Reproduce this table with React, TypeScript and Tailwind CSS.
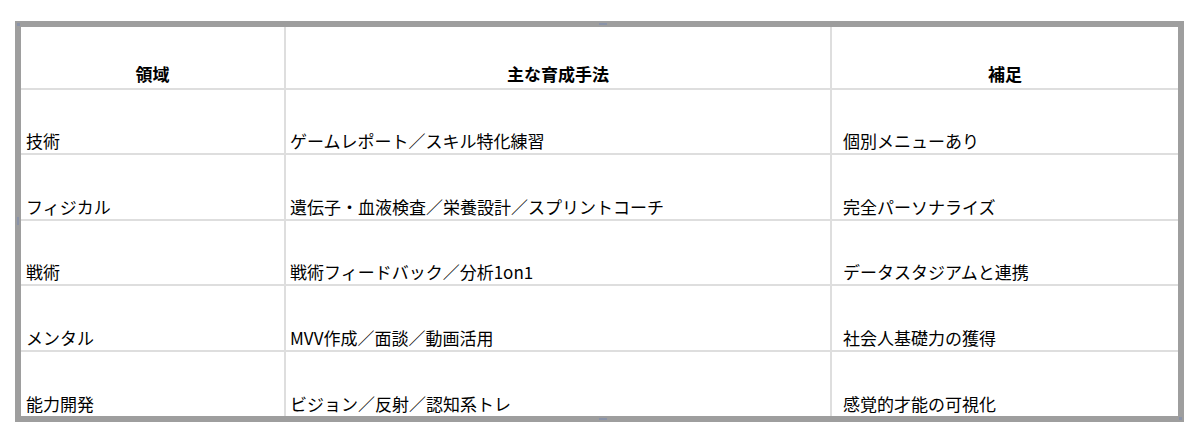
import React from "react";

const rows: [string, string, string][] = [
  ["技術", "ゲームレポート／スキル特化練習", "個別メニューあり"],
  ["フィジカル", "遺伝子・血液検査／栄養設計／スプリントコーチ", "完全パーソナライズ"],
  ["戦術", "戦術フィードバック／分析1on1", "データスタジアムと連携"],
  ["メンタル", "MVV作成／面談／動画活用", "社会人基礎力の獲得"],
  ["能力開発", "ビジョン／反射／認知系トレ", "感覚的才能の可視化"],
];

const pad = ["pl-[5px]", "pl-[4px] border-l-2 border-[#dedede]", "pl-[11px] border-l-2 border-[#dedede]"];

export default function App() {
  return (
    <div
      className="flex w-[1200px] h-[440px] bg-white pt-[21px] pl-[15px] items-start"
      style={{ fontFamily: '"Noto Sans CJK JP", "Noto Sans", sans-serif' }}
    >
      <div className="relative flex w-[1169px] h-[401px] border-[6px] border-[#9e9e9e] bg-white">
        <span className="absolute -left-[4px] -top-[4px] w-[3px] h-[3px] bg-[#8a93a8]" />
        <span className="absolute left-[578px] -top-[4px] w-[8px] h-[2px] bg-[#8a93a8]" />
        <span className="absolute left-[578px] -bottom-[4px] w-[8px] h-[2px] bg-[#8a93a8]" />
        <span className="absolute -left-[4px] top-[190px] w-[2px] h-[8px] bg-[#8a93a8]" />
        <span className="absolute -right-[4px] -bottom-[4px] w-[3px] h-[3px] bg-[#8a93a8]" />
        <table className="table-fixed border-collapse w-[1157px] text-[17px] text-black">
          <colgroup>
            <col className="w-[264px]" />
            <col className="w-[546px]" />
            <col className="w-[347px]" />
          </colgroup>
          <thead>
            <tr className="h-[62px]">
              {["領域", "主な育成手法", "補足"].map((h, i) => (
                <th
                  key={h}
                  className={`align-bottom text-center font-bold pb-[2px] leading-[24px] border-b-2 border-[#dedede] ${
                    i > 0 ? "border-l-2" : ""
                  }`}
                >
                  {h}
                </th>
              ))}
            </tr>
          </thead>
          <tbody>
            {rows.map((r, ri) => (
              <tr key={ri} className={ri === 4 ? "h-[65px]" : "h-[65px] border-b-2 border-[#dedede]"}>
                {r.map((c, ci) => (
                  <td key={ci} className={`align-bottom pb-0 leading-[24px] whitespace-nowrap ${pad[ci]}`}>
                    {c}
                  </td>
                ))}
              </tr>
            ))}
          </tbody>
        </table>
      </div>
    </div>
  );
}
